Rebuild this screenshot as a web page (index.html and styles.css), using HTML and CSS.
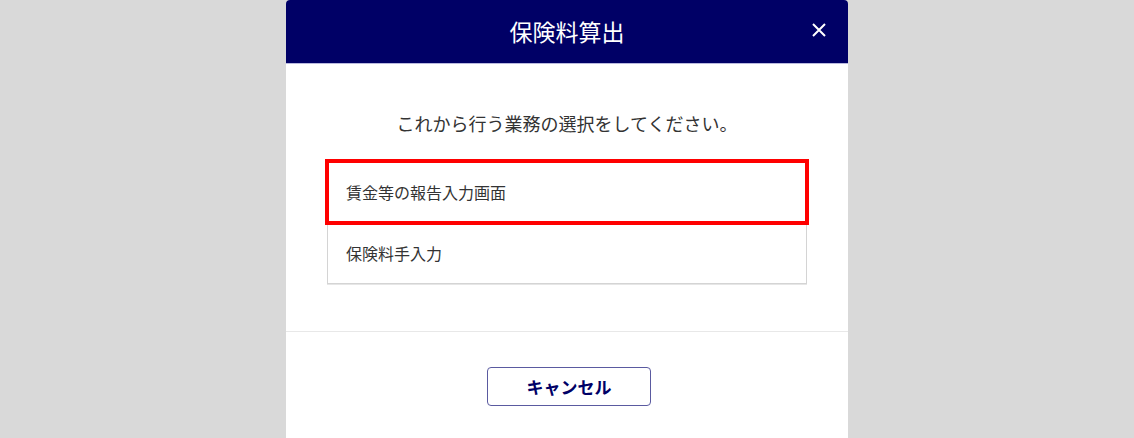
FILE: index.html
```html
<!DOCTYPE html>
<html lang="ja">
<head>
<meta charset="utf-8">
<title>保険料算出</title>
<link rel="stylesheet" href="styles.css">
</head>
<body>
<div class="modal">
  <div class="header">
    <h1 class="title">保険料算出</h1>
    <button class="close" aria-label="閉じる">
      <svg width="14" height="14" viewBox="0 0 14 14"><path d="M1 1L13 13M13 1L1 13" stroke="#fff" stroke-width="2" fill="none"/></svg>
    </button>
  </div>
  <div class="body">
    <p class="lead">これから行う業務の選択をしてください。</p>
    <ul class="list">
      <li class="item selected">賃金等の報告入力画面</li>
      <li class="item">保険料手入力</li>
    </ul>
  </div>
  <div class="footer">
    <button class="cancel">キャンセル</button>
  </div>
</div>
</body>
</html>
```
FILE: styles.css
```css
html, body {
  margin: 0;
  padding: 0;
  height: 438px;
  overflow: hidden;
}
body {
  background: #d9d9d9;
  font-family: "Noto Sans CJK JP", "Noto Sans", sans-serif;
}
.modal {
  width: 562px;
  margin: 0 auto;
  background: #fff;
  border-radius: 4px 4px 0 0;
  height: 438px;
  overflow: hidden;
}
.header {
  position: relative;
  height: 63px;
  background: #000066;
  border-bottom: 1px solid #b9b9de;
  display: flex;
  align-items: center;
  justify-content: center;
}
.title {
  margin: 0;
  color: #fff;
  font-size: 23px;
  font-weight: 400;
  line-height: 1;
  padding-bottom: 1px;
}
.close {
  position: absolute;
  right: 21px;
  top: 22px;
  width: 16px;
  height: 16px;
  padding: 0;
  border: 0;
  background: transparent;
  display: flex;
  align-items: center;
  justify-content: center;
}
.body {
  padding: 46px 41px 47px;
  border-bottom: 1px solid #e8e8e8;
}
.lead {
  margin: 0 0 25px;
  text-align: center;
  font-size: 18px;
  line-height: 26px;
  color: #333;
}
.list {
  list-style: none;
  margin: 0;
  padding: 0;
}
.item {
  height: 60px;
  padding: 0 18px;
  display: flex;
  align-items: center;
  font-size: 16px;
  color: #333;
  border: 1px solid #d4d4d4;
  border-top: 0;
  box-shadow: 0 1px 0 #e6e6e6;
}
.item:first-child {
  border-top: 1px solid #d4d4d4;
}
.item.selected {
  outline: 4px solid #ff0000;
  outline-offset: -2px;
  position: relative;
}
.footer {
  display: flex;
  justify-content: center;
  padding-top: 35px;
}
.cancel {
  width: 164px;
  height: 39px;
  margin-left: 4px;
  background: #fff;
  border: 1px solid #5a5aa0;
  border-radius: 4px;
  font-family: "Noto Sans CJK JP", "Noto Sans", sans-serif;
  font-size: 17px;
  font-weight: 700;
  color: #000066;
  padding: 0;
}
```
